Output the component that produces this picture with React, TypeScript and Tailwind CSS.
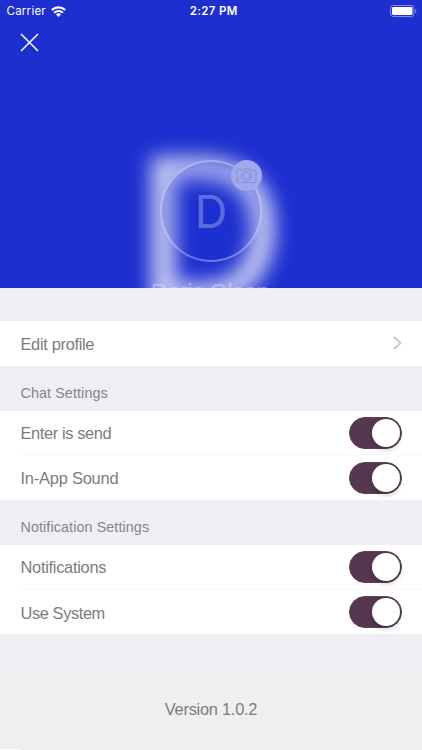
import React from "react";

const sans = "font-['Liberation_Sans',Arial,sans-serif]";

function Toggle() {
  return (
    <div className="mt-px flex h-[32px] w-[53px] items-center justify-end rounded-full border border-[#5f4058] bg-[#553750] pr-px">
      <div className="size-[28px] rounded-full bg-white shadow-[0_3px_5px_rgba(0,0,0,0.2)]" />
    </div>
  );
}

function Row({ label, spacing, divided }: { label: string; spacing: string; divided?: boolean }) {
  return (
    <div className="flex h-[44.75px] bg-white pl-[20.5px]">
      <div className={`flex flex-1 items-center justify-between pr-[20.5px] ${divided ? "border-b border-[#f7f7f8]" : ""}`}>
        <span className={`pt-[1.5px] text-[16.4px] leading-5 text-[#7c7c7c] ${spacing}`}>{label}</span>
        <Toggle />
      </div>
    </div>
  );
}

function SectionTitle({ children }: { children: React.ReactNode }) {
  return (
    <h2 className="flex h-[44.75px] items-end pb-[8px] pl-[20.5px] text-[14.3px] leading-5 tracking-[0.11px] text-[#848488]">
      {children}
    </h2>
  );
}

function StatusBar() {
  return (
    <div className="grid h-[22px] grid-cols-3 items-center pr-[5px] pl-[6.5px] font-['Inter',sans-serif] text-[11.5px] leading-[22px] text-white">
      <div className="flex items-center gap-[5px]">
        <span className="tracking-[0.25px]">Carrier</span>
        <svg width="15" height="11" viewBox="0 0 15 11" fill="none" stroke="white" strokeWidth="2.1">
          <path d="M.8 4.1a9.5 9.5 0 0 1 13.4 0" />
          <path d="M3.1 6.8a6.2 6.2 0 0 1 8.8 0" />
          <path d="M7.5 10.9 5 8.5a3.6 3.6 0 0 1 5 0Z" fill="white" stroke="none" />
        </svg>
      </div>
      <span className="pl-1 text-center font-semibold tracking-[0.35px] whitespace-nowrap">2:27 PM</span>
      <svg className="justify-self-end" width="27" height="12" viewBox="0 0 27 12">
        <rect x=".5" y=".5" width="23.5" height="11" rx="2.8" fill="none" stroke="white" strokeOpacity=".45" />
        <rect x="2" y="2" width="20.5" height="8" rx="1.4" fill="white" />
        <path d="M25.2 4v4c1.6-.6 1.6-3.4 0-4Z" fill="white" fillOpacity=".45" />
      </svg>
    </div>
  );
}

export default function App() {
  return (
    <main className={`flex h-[750px] w-[422px] flex-col overflow-hidden bg-[#efeef5] ${sans}`}>
      <header className="relative h-[287.5px] shrink-0 overflow-hidden bg-[#1d2fcf]">
        <StatusBar />
        <button aria-label="Close" className="mt-[11px] ml-5 block">
          <svg width="19" height="19" viewBox="0 0 19 19" fill="none" stroke="white" strokeWidth="1.5">
            <path d="m1 1 17 17M18 1 1 18" />
          </svg>
        </button>
        <div aria-hidden className="absolute top-[130px] left-[138px] origin-left scale-x-[0.97] text-[205px] leading-[200px] text-white/70 blur-[10px] [-webkit-text-stroke:6px_rgba(255,255,255,0.7)]">
          D
        </div>
        <div className="absolute top-[160px] left-[160px] flex size-[102px] items-center justify-center rounded-full border-2 border-white/35 bg-[#1d2fcf]/15">
          <span className="font-['Inter',sans-serif] text-[45px] leading-none font-normal text-white/30">D</span>
        </div>
        <div className="absolute top-[160px] left-[231px] flex size-[31px] items-center justify-center rounded-full bg-[#a0a9ed]">
          <svg width="21" height="17" viewBox="0 0 21 17" fill="none" stroke="#828bcc" strokeWidth=".8">
            <path d="M1 3.5H2V2H5V3.5H6.5L8 1.500H13L14.500 3.500H20V15.500H1Z" />
            <circle cx="10.5" cy="9" r="5.2" />
            <circle cx="10.5" cy="9" r="3.2" />
          </svg>
        </div>
        <div className="absolute top-[279.5px] left-[151px] text-[22.6px] leading-6 whitespace-nowrap text-white/30 [-webkit-text-stroke:0.4px_rgba(255,255,255,0.2)]">
          Doris Olson
        </div>
      </header>

      <div className="mt-[33.5px] flex h-[44.75px] shrink-0 items-center justify-between bg-white pr-5 pl-[20.5px]">
        <span className="pt-[1.5px] text-[16.4px] leading-5 tracking-[-0.32px] text-[#7c7c7c]">Edit profile</span>
        <svg width="9" height="14" viewBox="0 0 9 14" fill="none" stroke="#c6c6cb" strokeWidth="1.8">
          <path d="m1 1 6.5 6L1 13" />
        </svg>
      </div>

      <SectionTitle>Chat Settings</SectionTitle>
      <Row label="Enter is send" spacing="tracking-[-0.38px]" divided />
      <Row label="In-App Sound" spacing="tracking-[-0.2px]" />
      <SectionTitle>Notification Settings</SectionTitle>
      <Row label="Notifications" spacing="tracking-[-0.28px]" divided />
      <Row label="Use System" spacing="tracking-[-0.4px]" />

      <footer className="mt-[32px] flex flex-1 flex-col justify-between bg-[#efefef]">
        <p className="pt-[33px] text-center text-[16.4px] leading-5 tracking-[-0.25px] text-[#7c7c7c]">Version 1.0.2</p>
        <div className="h-px w-[21px] bg-white" />
      </footer>
    </main>
  );
}
